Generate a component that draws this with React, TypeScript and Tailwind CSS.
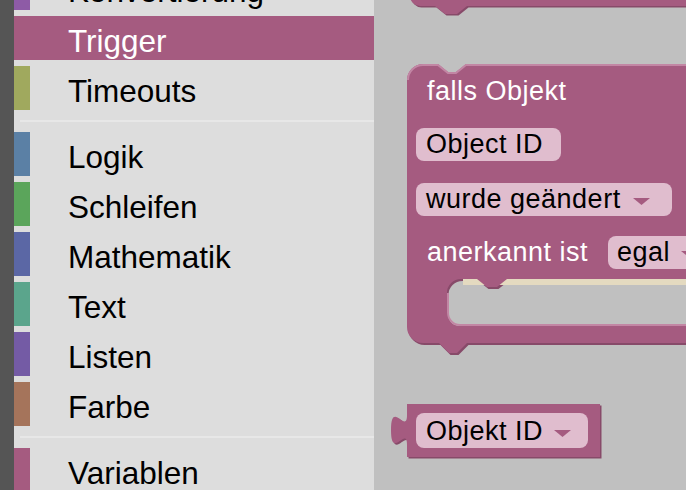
import React from "react";

type Item =
  | { kind: "row"; label: string; bar: string; selected?: boolean }
  | { kind: "sep" };

const items: Item[] = [
  { kind: "row", label: "Konvertierung", bar: "bg-[#8e5ba6]" },
  { kind: "row", label: "Trigger", bar: "bg-[#a55b80]", selected: true },
  { kind: "row", label: "Timeouts", bar: "bg-[#a0a95e]" },
  { kind: "sep" },
  { kind: "row", label: "Logik", bar: "bg-[#5b80a5]" },
  { kind: "row", label: "Schleifen", bar: "bg-[#5ba55b]" },
  { kind: "row", label: "Mathematik", bar: "bg-[#5b67a5]" },
  { kind: "row", label: "Text", bar: "bg-[#5ba58c]" },
  { kind: "row", label: "Listen", bar: "bg-[#745ba5]" },
  { kind: "row", label: "Farbe", bar: "bg-[#a5745b]" },
  { kind: "sep" },
  { kind: "row", label: "Variablen", bar: "bg-[#a55b80]" },
];

function Arrow({ className }: { className: string }) {
  return (
    <svg width="17" height="7" viewBox="0 0 17 7" className={className}>
      <polygon points="0,0 17,0 8.5,7" fill="#a55b80" />
    </svg>
  );
}

const MAIN_PATH =
  "M 0,16 A 16,16 0 0 1 16,0 H 31 l 10,8 h 8 l 10,-8 H 330 V 215 H 100 l -10,8 h -10 l -10,-8 H 54 A 14,14 0 0 0 40,229 V 249 A 13,13 0 0 0 53,262 H 330 V 279 H 60 l -10,10 h -8 l -10,-10 H 16 A 16,16 0 0 1 0,263 Z";

const VALUE_PATH =
  "M 0,0 H 193 V 53 H 0 V 41 C 0,21 -16,57 -16,26 C -16,-5 0,31 0,11 Z";

const TOP_PATH =
  "M 36,-20 V -4 A 10,10 0 0 0 46,6 H 61 l 10,8 h 12 l 10,-8 H 330 V -20 Z";

export default function App() {
  return (
    <div className="flex h-[490px] w-[686px] overflow-hidden font-['Liberation_Sans',Arial,sans-serif]">
      <div className="w-[14px] shrink-0 bg-[#555555]" />
      <div className="w-[360px] shrink-0 overflow-hidden bg-[#dddddd]">
        <div className="-mt-[34px] flex flex-col">
          {items.map((it, i) =>
            it.kind === "sep" ? (
              <div key={i} className="mb-[10px] ml-[6px] mt-[4px] h-[2px] shrink-0 bg-[#e7e7e7]" />
            ) : (
              <div
                key={i}
                className={`mb-[6px] flex h-[44px] shrink-0 ${
                  it.selected ? "bg-[#a55b80] text-white" : "text-black"
                }`}
              >
                <div className={`w-[16px] shrink-0 ${it.bar}`} />
                <span className="whitespace-nowrap pl-[38px] pt-[6px] text-[31.5px] leading-[38px]">
                  {it.label}
                </span>
              </div>
            )
          )}
        </div>
      </div>

      <div className="relative flex-1 overflow-hidden bg-[#c0c0c0] text-[27px] tracking-[0.5px]">
        {/* partial block at top */}
        <svg className="absolute left-0 top-0 overflow-visible" width="312" height="20">
          <path d={TOP_PATH} fill="#874a69" transform="translate(1.5,1.5)" />
          <path d={TOP_PATH} fill="#a55b80" />
        </svg>

        {/* main trigger block */}
        <div className="absolute left-[33px] top-[64px] w-[330px]">
          <svg className="absolute left-0 top-0 overflow-visible" width="330" height="279">
            <path d={MAIN_PATH} fill="#874a69" transform="translate(1.5,2)" />
            <rect x="56" y="215" width="280" height="6" fill="#e4dac0" />
            <path d={MAIN_PATH} fill="#a55b80" />
            <path
              d="M 1,16 A 15,15 0 0 1 16,1 H 31 l 10,8 h 8 l 10,-8 H 330"
              fill="none"
              stroke="#c286a4"
              strokeWidth="2"
            />
            <path
              d="M 41,229 V 249 A 12,12 0 0 0 53,261 H 330"
              fill="none"
              stroke="#c286a4"
              strokeWidth="2"
            />
          </svg>
          <div className="relative flex flex-col pl-[9px]">
            <div className="h-[64px] whitespace-nowrap pl-[11px] pt-[11px] leading-[33px] text-white">
              falls Objekt
            </div>
            <div className="h-[55px]">
              <div className="flex h-[33px] w-[145px] items-center rounded-[8px] bg-[#e0bdce] pl-[10px] text-black">
                <span className="whitespace-nowrap leading-[33px]">Object ID</span>
              </div>
            </div>
            <div className="h-[53px]">
              <div className="flex h-[33px] w-[256px] items-center rounded-[8px] bg-[#e0bdce] pl-[10px] text-black">
                <span className="whitespace-nowrap leading-[33px]">wurde geändert</span>
                <Arrow className="ml-[12px] mt-[4px] shrink-0" />
              </div>
            </div>
            <div className="flex h-[44px] items-start">
              <span className="w-[192px] shrink-0 whitespace-nowrap pl-[11px] leading-[33px] text-white">
                anerkannt ist
              </span>
              <div className="flex h-[33px] w-[110px] shrink-0 items-center rounded-[8px] bg-[#e0bdce] pl-[9px] text-black">
                <span className="whitespace-nowrap leading-[33px]">egal</span>
                <Arrow className="ml-[11px] mt-[4px] shrink-0" />
              </div>
            </div>
            <div className="h-[46px]" />
            <div className="h-[17px]" />
          </div>
        </div>

        {/* value block */}
        <div className="absolute left-[33px] top-[404px] h-[53px] w-[193px]">
          <svg className="absolute left-0 top-0 overflow-visible" width="193" height="53">
            <path d={VALUE_PATH} fill="#874a69" transform="translate(1.5,1.5)" />
            <path d={VALUE_PATH} fill="#a55b80" />
          </svg>
          <div className="relative flex p-[9px]">
            <div className="flex h-[35px] w-[172px] items-center rounded-[8px] bg-[#e0bdce] pl-[10px] text-black">
              <span className="whitespace-nowrap pt-[2px] leading-[33px]">Objekt ID</span>
              <Arrow className="ml-[11px] mt-[6px] shrink-0" />
            </div>
          </div>
        </div>
      </div>
    </div>
  );
}
